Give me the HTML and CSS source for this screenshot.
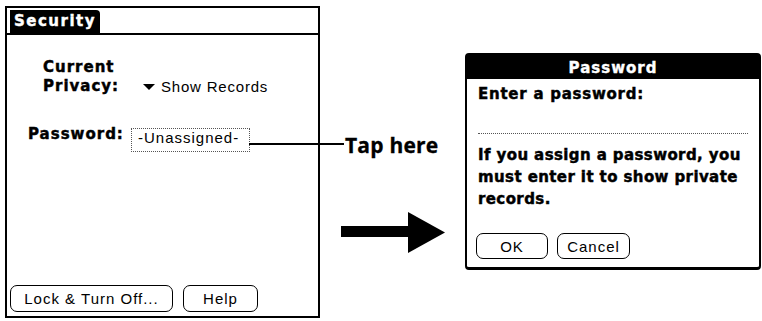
FILE: index.html
```html
<!DOCTYPE html>
<html>
<head>
<meta charset="utf-8">
<link rel="stylesheet" href="styles.css">
</head>
<body>
<div class="page">
  <section class="screen">
    <header class="screen-head"><span class="tab">Security</span></header>
    <div class="screen-body">
      <div class="privacy">
        <div class="label label-privacy">Current<br>Privacy:</div>
        <div class="picker"><span class="tri"></span>Show Records</div>
      </div>
      <div class="pw-row">
        <span class="label label-pw">Password:</span>
        <span class="pw-field">-Unassigned-</span>
      </div>
      <div class="screen-buttons">
        <button class="btn btn-lock">Lock &amp; Turn Off...</button>
        <button class="btn btn-help">Help</button>
      </div>
    </div>
  </section>
  <div class="annot">
    <div class="tap">Tap here</div>
    <svg class="arrow" width="104" height="41" viewBox="0 0 104 41">
      <rect x="0" y="14" width="68" height="11" fill="#000"/>
      <polygon points="67,0 104,20.5 67,41" fill="#000"/>
    </svg>
  </div>
  <section class="dialog">
    <header class="dialog-head">Password</header>
    <div class="dialog-body">
      <div class="prompt">Enter a password:</div>
      <div class="entry"></div>
      <p class="note">If you assign a password, you<br>must enter it to show private<br>records.</p>
      <div class="dialog-buttons">
        <button class="btn btn-ok">OK</button>
        <button class="btn btn-cancel">Cancel</button>
      </div>
    </div>
  </section>
</div>
</body>
</html>
```
FILE: styles.css
```css
html, body {
  margin: 0;
  padding: 0;
  background: #fff;
  color: #000;
}
.page {
  display: flex;
  align-items: flex-start;
  width: 762px;
  height: 321px;
  overflow: hidden;
}
.screen {
  box-sizing: border-box;
  margin: 6px 0 0 5px;
  width: 315px;
  height: 312px;
  border: 2px solid #000;
  display: flex;
  flex-direction: column;
}
.screen-head {
  display: flex;
  padding: 2px 0 0 3px;
  border-bottom: 2px solid #000;
}
.tab {
  background: #000;
  color: #fff;
  height: 23px;
  padding: 0 4px;
  border-top-right-radius: 4px;
  font: bold 15px/23px "DejaVu Sans", sans-serif;
  letter-spacing: 1.5px;
  -webkit-text-stroke: 0.4px #fff;
}
.screen-body {
  flex: 1;
  display: flex;
  flex-direction: column;
  padding-top: 23px;
}
.label {
  font: bold 15px/19px "DejaVu Sans", sans-serif;
  letter-spacing: 1px;
  -webkit-text-stroke: 0.45px #000;
}
.privacy {
  display: flex;
  padding-left: 36px;
}
.label-privacy {
  width: 100px;
}
.picker {
  align-self: flex-end;
  font: 15px/19px "Liberation Sans", sans-serif;
  letter-spacing: 0.8px;
}
.tri {
  display: inline-block;
  width: 0;
  height: 0;
  border-left: 6.5px solid transparent;
  border-right: 6.5px solid transparent;
  border-top: 6px solid #000;
  margin-right: 6px;
  vertical-align: 2px;
}
.pw-row {
  display: flex;
  align-items: flex-start;
  margin-top: 29px;
  padding-left: 21px;
}
.label-pw {
  width: 103px;
}
.pw-field {
  position: relative;
  box-sizing: border-box;
  width: 119px;
  height: 24px;
  margin-top: 3px;
  padding: 0 0 0 6px;
  border: 1px dotted #555;
  font: 15px/17px "Liberation Sans", sans-serif;
  letter-spacing: 1px;
}
.pw-field::after {
  content: "";
  position: absolute;
  left: 100%;
  top: 14px;
  width: 95px;
  height: 2px;
  background: #000;
}
.screen-buttons {
  margin-top: auto;
  display: flex;
  gap: 10px;
  padding: 0 0 4px 3px;
}
.btn {
  box-sizing: border-box;
  height: 27px;
  padding: 0;
  margin: 0;
  background: #fff;
  color: #000;
  border: 1.5px solid #000;
  border-radius: 7px;
  font: 15px/24px "Liberation Sans", sans-serif;
  letter-spacing: 1px;
  text-align: center;
}
.btn-lock { width: 163px; }
.btn-help { width: 75px; }
.annot {
  width: 124px;
  margin-left: 21px;
  padding-top: 133px;
}
.tap {
  margin-left: 4px;
  font: bold 21px/24px "Open Sans", sans-serif;
  letter-spacing: 0.2px;
  -webkit-text-stroke: 0.3px #000;
}
.arrow {
  display: block;
  margin-top: 55px;
}
.dialog {
  box-sizing: border-box;
  width: 296px;
  margin-top: 53px;
  border: 2px solid #000;
  border-bottom-width: 3px;
  border-radius: 4px;
}
.dialog-head {
  background: #000;
  color: #fff;
  text-align: center;
  height: 24px;
  padding-top: 2px;
  box-sizing: border-box;
  font: bold 15px/22px "DejaVu Sans", sans-serif;
  letter-spacing: 1px;
  -webkit-text-stroke: 0.4px #fff;
}
.dialog-body {
  padding: 6px 11px 8px;
}
.prompt {
  font: bold 15px/19px "DejaVu Sans", sans-serif;
  letter-spacing: 0.75px;
  -webkit-text-stroke: 0.45px #000;
}
.entry {
  margin-top: 29px;
  border-top: 1px dotted #555;
}
.note {
  margin: 10px 0 0;
  white-space: nowrap;
  font: bold 15px/22px "DejaVu Sans", sans-serif;
  letter-spacing: 0.4px;
  -webkit-text-stroke: 0.45px #000;
}
.dialog-buttons {
  display: flex;
  gap: 9px;
  margin: 23px 0 0 -2px;
}
.dialog-buttons .btn {
  height: 26px;
  line-height: 23px;
}
.btn-ok { width: 72px; }
.btn-cancel { width: 73px; }
```
